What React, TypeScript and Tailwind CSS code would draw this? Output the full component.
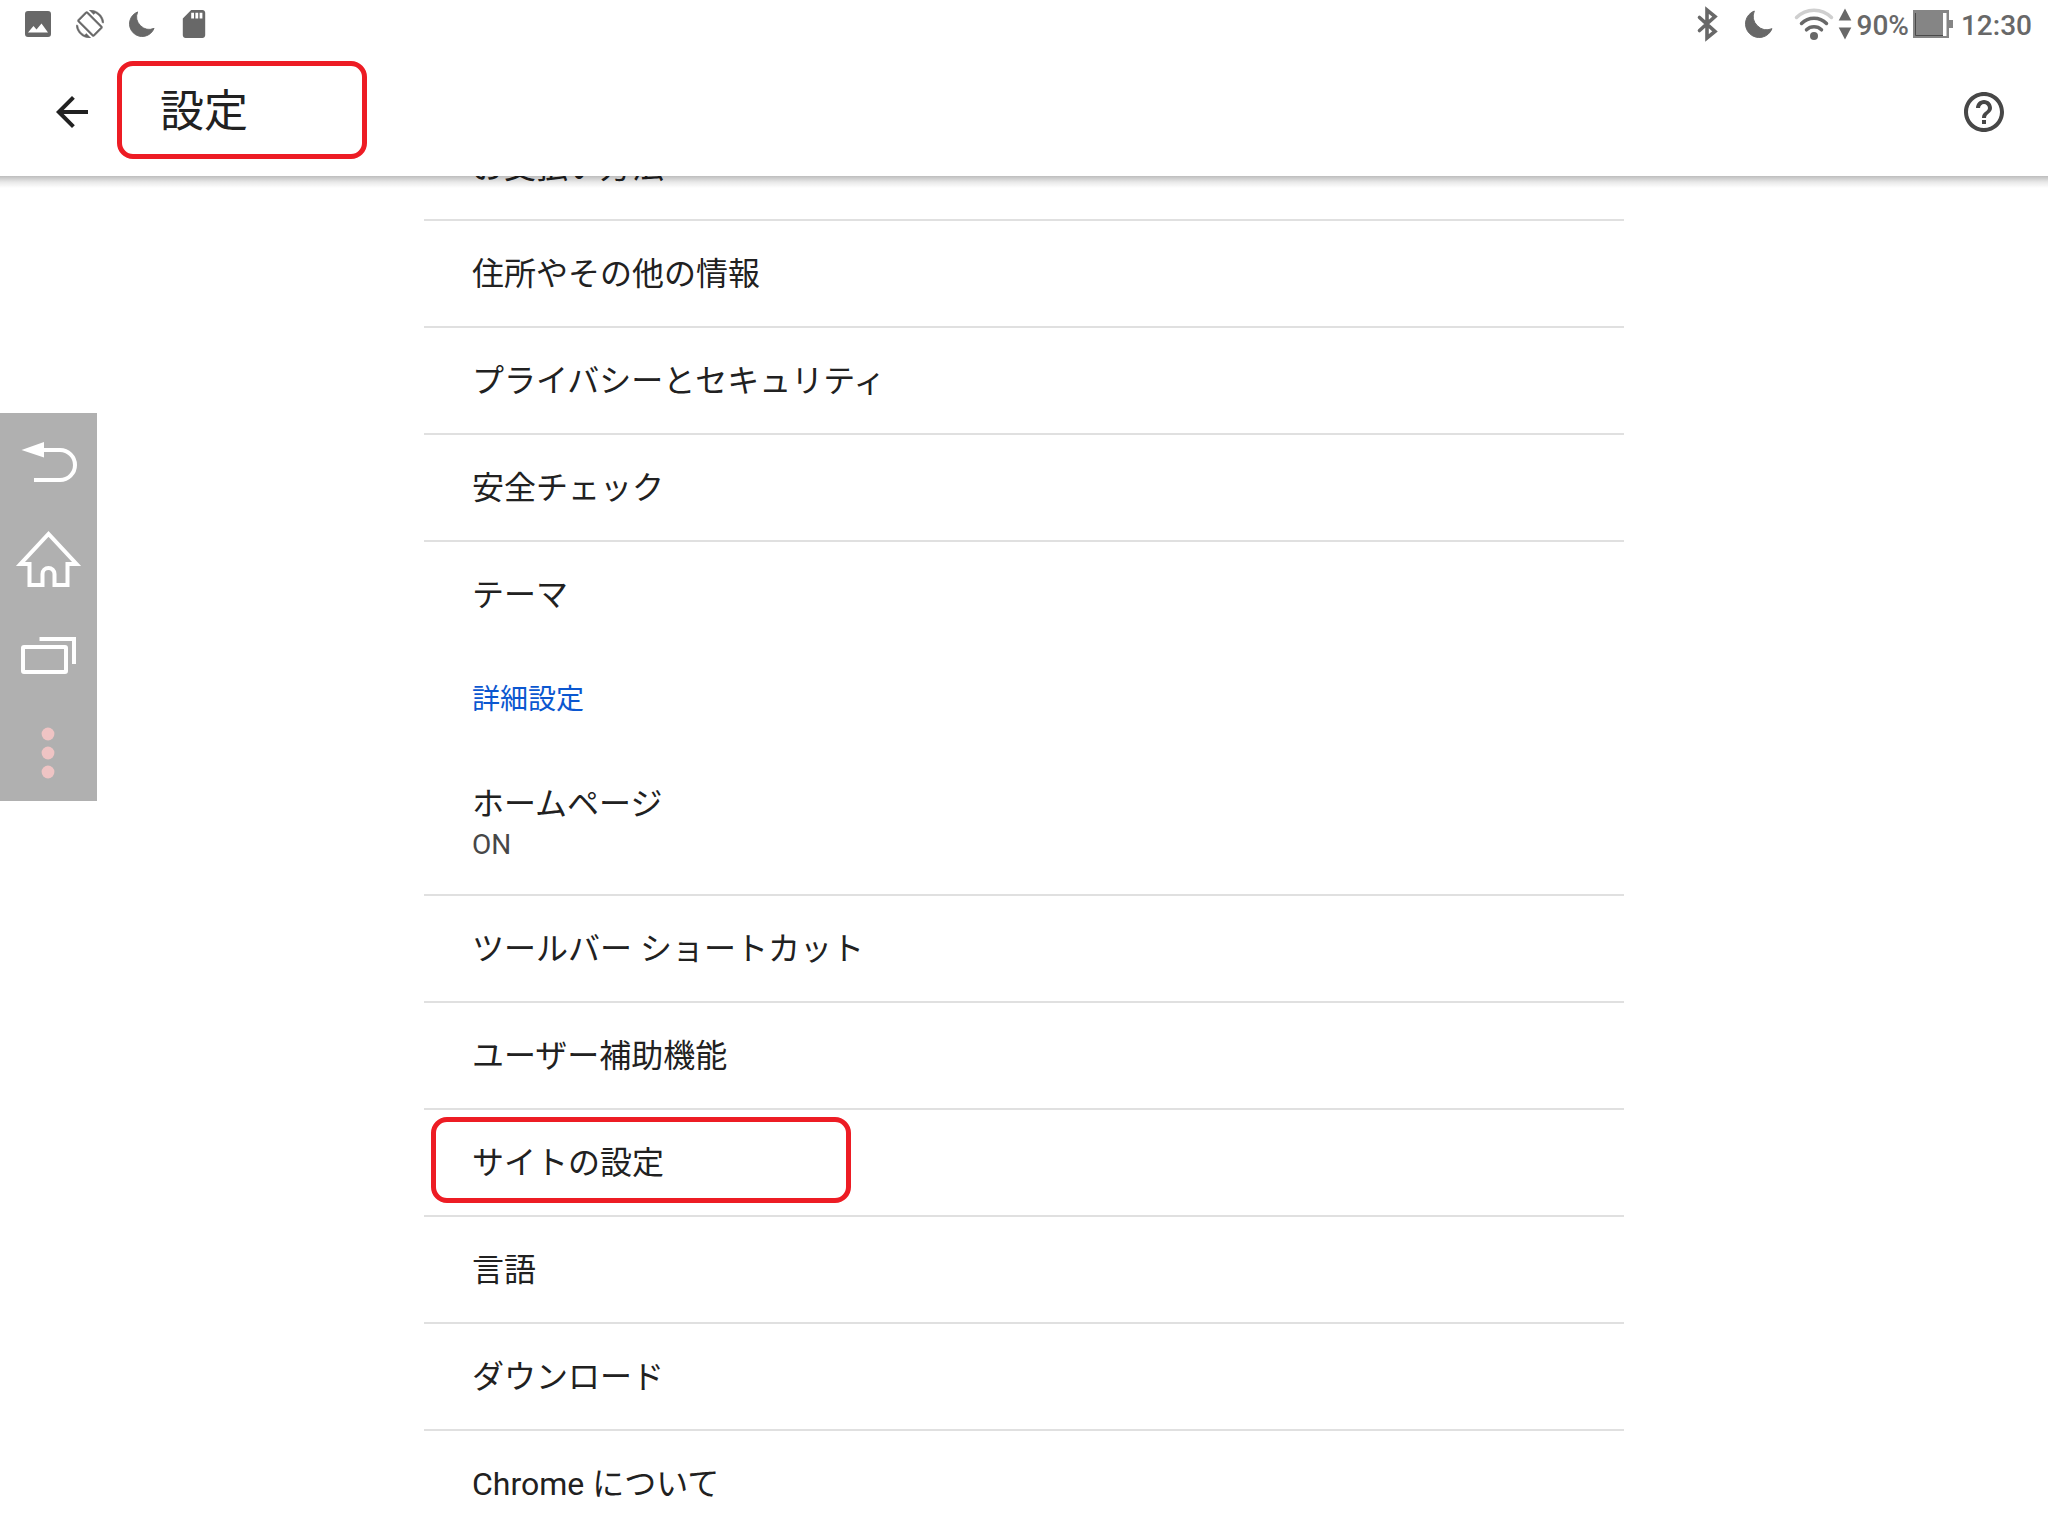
import type { ReactNode } from 'react'
import { MdArrowBack, MdHelpOutline } from 'react-icons/md'
import { clsx } from 'clsx'

type Item = {
  label: string
  summary?: string
  divider?: boolean
  highlighted?: boolean
}

const basicItems: Item[] = [
  { label: 'お支払い方法', divider: true },
  { label: '住所やその他の情報', divider: true },
  { label: 'プライバシーとセキュリティ', divider: true },
  { label: '安全チェック', divider: true },
  { label: 'テーマ' },
]

const advancedItems: Item[] = [
  { label: 'ホームページ', summary: 'ON', divider: true },
  { label: 'ツールバー ショートカット', divider: true },
  { label: 'ユーザー補助機能', divider: true },
  { label: 'サイトの設定', divider: true, highlighted: true },
  { label: '言語', divider: true },
  { label: 'ダウンロード', divider: true },
  { label: 'Chrome について' },
]

function MoonIcon({ size }: { size: number }) {
  return (
    <svg width={size} height={size} viewBox="0 0 28 28" fill="currentColor" stroke="currentColor" strokeLinejoin="round">
      <path d="M9.300 1A13.700 13.700 0 1 0 27 18.700A13.600 13.600 0 0 1 9.300 1Z" />
    </svg>
  )
}

function PictureIcon() {
  return (
    <svg width="26" height="26" viewBox="0 0 26 26" fill="currentColor">
      <path
        fillRule="evenodd"
        d="M3 0H23A3 3 0 0 1 26 3V23A3 3 0 0 1 23 26H3A3 3 0 0 1 0 23V3A3 3 0 0 1 3 0ZM3 21.500H23L16.500 12.500L11.500 18.500L8.500 15Z"
      />
    </svg>
  )
}

function RotationIcon() {
  return (
    <svg width="28" height="28" viewBox="0 0 24 24" fill="currentColor" stroke="currentColor" strokeWidth="0.400">
      <path d="M16.480 2.520c3.270 1.550 5.610 4.720 5.970 8.480h1.500C23.440 4.840 18.290 0 12 0l-.66.03 3.810 3.810 1.330-1.320z" />
      <path d="M10.230 1.750c-.59-.59-1.540-.59-2.120 0L1.750 8.110c-.59.59-.59 1.540 0 2.120l12.020 12.020c.59.59 1.540.59 2.120 0l6.360-6.360c.59-.59.59-1.540 0-2.120L10.230 1.750zm4.600 19.440L2.810 9.170l6.360-6.360 12.020 12.020-6.360 6.360z" />
      <path d="M7.520 21.480C4.250 19.940 1.910 16.760 1.550 13H.05C.56 19.160 5.710 24 12 24l.66-.03-3.810-3.810-1.330 1.320z" />
    </svg>
  )
}

function SdCardIcon() {
  return (
    <svg width="28" height="28" viewBox="2 2 20 20" fill="currentColor">
      <path d="M18 2h-8L4 8v12c0 1.100.9 2 2 2h12c1.100 0 2-.9 2-2V4c0-1.100-.9-2-2-2zm-6 6h-2V4h2v4zm3 0h-2V4h2v4zm3 0h-2V4h2v4z" />
    </svg>
  )
}

function BluetoothIcon() {
  return (
    <svg width="24" height="36" viewBox="0 0 24 36" fill="none" stroke="currentColor" strokeWidth="3.600" strokeLinecap="round">
      <path d="M4.500 11.500L20 25.500L12 32V4L20 10.500L4.500 24.500" />
    </svg>
  )
}

function WifiIcon() {
  return (
    <svg width="40" height="34" viewBox="0 0 40 34" fill="none" stroke="currentColor" strokeWidth="3.500" strokeLinecap="round">
      <path d="M2.500 10.500A24.500 24.500 0 0 1 37.500 10.500" stroke="#cfcfcf" />
      <path d="M7.500 16.500A17.500 17.500 0 0 1 32.500 16.500" />
      <path d="M12.500 22.800A11 11 0 0 1 27.500 22.800" />
      <circle cx="20" cy="29" r="4" fill="currentColor" stroke="none" />
    </svg>
  )
}

function DataArrowsIcon() {
  return (
    <svg width="14" height="32" viewBox="0 0 14 32" fill="currentColor">
      <path d="M7 0.500L13.300 12.500H0.700ZM7 31.500L13.300 19.500H0.700Z" />
    </svg>
  )
}

function BatteryIcon() {
  return (
    <svg width="40" height="28" viewBox="0 0 40 28">
      <path d="M0 0H36V10H40V18H36V28H0Z" fill="#858585" />
      <path d="M30 3H33.500V26H30Z" fill="#fff" />
      <path d="M2.500 3V25.500H30" fill="none" stroke="#4a4a4a" />
    </svg>
  )
}

function StatusBar() {
  return (
    <div className="flex h-12 items-center justify-between pl-[25px] pr-4 text-[#686868]">
      <div className="flex items-center gap-[25px]">
        <PictureIcon />
        <RotationIcon />
        <MoonIcon size={26} />
        <SdCardIcon />
      </div>
      <div className="flex items-center">
        <BluetoothIcon />
        <div className="ml-[26px] mr-[21px]">
          <MoonIcon size={28} />
        </div>
        <WifiIcon />
        <div className="ml-1 mr-[5px]">
          <DataArrowsIcon />
        </div>
        <span className="pt-1 text-[28px] leading-8 font-medium">90%</span>
        <div className="ml-1 mr-2">
          <BatteryIcon />
        </div>
        <span className="pt-1 text-[28px] leading-8 font-medium">12:30</span>
      </div>
    </div>
  )
}

function Row({ item }: { item: Item }) {
  return (
    <li className={clsx('relative', item.divider && 'border-b-2 border-[#e0e0e0]')}>
      <button
        className={clsx(
          'flex w-full flex-col justify-center px-12 text-left',
          item.summary ? 'h-36' : 'h-[105px]',
        )}
      >
        <span className="text-[32px] leading-[46px] text-[#212121]">{item.label}</span>
        {item.summary && (
          <span className="text-[28px] leading-9 text-[#474747]">{item.summary}</span>
        )}
      </button>
      {item.highlighted && (
        <div className="pointer-events-none absolute left-[7px] top-[7px] h-[86px] w-[420px] rounded-2xl border-5 border-[#ed1c24]" />
      )}
    </li>
  )
}

function NavButton({ label, children }: { label: string; children: ReactNode }) {
  return (
    <button aria-label={label}>
      <svg width="97" height="97" viewBox="0 0 97 97" fill="none" stroke="#fff" strokeWidth="4">
        {children}
      </svg>
    </button>
  )
}

// Floating system keys at the left edge
function NavPanel() {
  return (
    <nav className="absolute left-0 top-[413px] z-20 flex flex-col bg-[#b0b0b0]">
      <NavButton label="戻る">
        <path d="M42 37H60A15 15 0 0 1 60 67H34" />
        <path d="M21.500 37L44 29V44.500Z" fill="#fff" stroke="none" />
      </NavButton>
      <NavButton label="ホーム">
        <path d="M29.500 54H20.500L48.500 24L76.500 54H67.500V75H54.500V64A6 6 0 0 0 42.500 64V75H29.500Z" />
      </NavButton>
      <NavButton label="最近使ったアプリ">
        <rect x="23" y="40" width="43" height="25" rx="1" />
        <path d="M39.500 32H74V57" />
      </NavButton>
      <NavButton label="メニュー">
        <g fill="#efc4c4" stroke="none">
          <circle cx="48" cy="30" r="6.400" />
          <circle cx="48" cy="49" r="6.400" />
          <circle cx="48" cy="68" r="6.400" />
        </g>
      </NavButton>
    </nav>
  )
}

export default function App() {
  return (
    <div className="relative flex h-screen flex-col overflow-hidden bg-white font-[family-name:Roboto,'Noto_Sans_CJK_JP',sans-serif]">
      {/* Status bar and toolbar */}
      <header className="relative z-10 shrink-0 bg-white">
        <StatusBar />
        <div className="flex h-32 items-center pl-12 pr-10">
          <button aria-label="戻る" className="text-[#212121]">
            <MdArrowBack size={48} />
          </button>
          <h1 className="mb-1 ml-[21px] flex h-[98px] w-[250px] items-center rounded-2xl border-5 border-[#ed1c24] pl-[38px] pt-1 text-[44px] leading-[64px] text-[#212121]">
            設定
          </h1>
          <button aria-label="ヘルプ" className="ml-auto text-[#474747]">
            <MdHelpOutline size={48} />
          </button>
        </div>
        <div className="absolute inset-x-0 top-full h-3 bg-linear-to-b from-black/26 via-black/9 to-transparent" />
      </header>

      {/* Settings list, scrolled to the end */}
      <main className="flex min-h-0 flex-1 flex-col justify-end overflow-hidden">
        <div className="mx-auto w-full max-w-[1200px] shrink-0">
          <ul>
            {basicItems.map(item => <Row key={item.label} item={item} />)}
          </ul>
          <h2 className="flex h-[103px] items-center px-12 pt-0.5 text-[28px] leading-10 text-[#0b57d0]">
            詳細設定
          </h2>
          <ul>
            {advancedItems.map(item => <Row key={item.label} item={item} />)}
          </ul>
        </div>
      </main>

      <NavPanel />
    </div>
  )
}
